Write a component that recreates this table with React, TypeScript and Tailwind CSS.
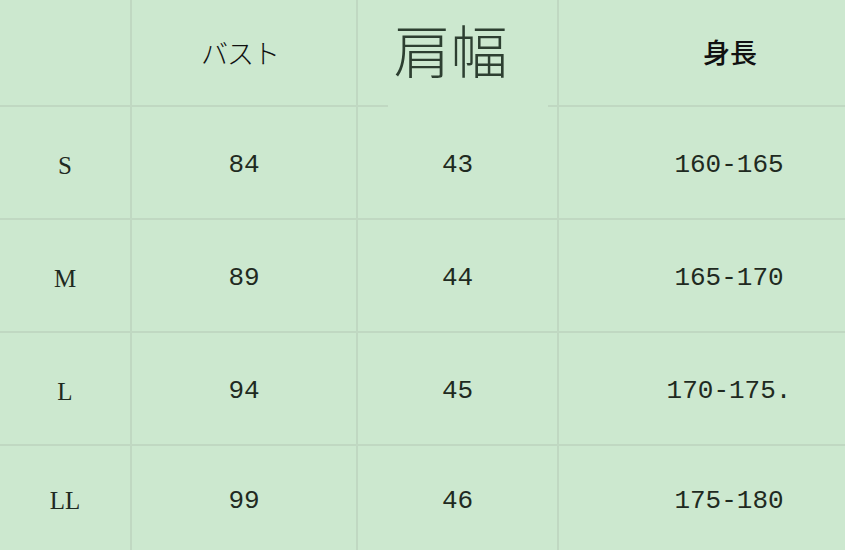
const rows = [
  { size: 'S', bust: '84', shoulder: '43', height: '160-165' },
  { size: 'M', bust: '89', shoulder: '44', height: '165-170' },
  { size: 'L', bust: '94', shoulder: '45', height: '170-175.' },
  { size: 'LL', bust: '99', shoulder: '46', height: '175-180' },
];

const mono = "[font-family:'Liberation_Mono','DejaVu_Sans_Mono',monospace]";
const cell = 'bg-[#cce8cf] flex items-center justify-center text-[#1f2a21]';

export default function App() {
  return (
    <div className="w-[845px] h-[550px] overflow-hidden bg-[#c0d8c2]">
      <div className="grid grid-cols-[130px_224px_199px_286px] grid-rows-[105px_111px_111px_111px_104px] gap-[2px]">
        {/* header */}
        <div className={cell} />
        <div className={`${cell} pr-[8px] pt-[1px]`}>
          <span className="text-[27px] font-light tracking-[-1px] text-[#111] [font-family:'Noto_Sans_CJK_JP',sans-serif]">バスト</span>
        </div>
        <div className={`${cell} relative pr-[14px] pb-[8px]`}>
          <span className="text-[57px] font-light leading-none text-[#2d3f31] [font-family:'Noto_Sans_CJK_JP',sans-serif]">肩幅</span>
          <div className="absolute left-[30px] -bottom-[2px] w-[160px] h-[2px] bg-[#cce8cf]" />
        </div>
        <div className={`${cell} pl-[56px]`}>
          <span className="text-[27px] font-medium text-[#111] [font-family:'Noto_Sans_CJK_JP',sans-serif]">身長</span>
        </div>

        {rows.map((r) => (
          <>
            <div key={r.size + 'a'} className={`${cell} pt-[6px]`}>
              <span className="text-[25px] [font-family:'Liberation_Serif',serif]">{r.size}</span>
            </div>
            <div key={r.size + 'b'} className={`${cell} pt-[6px]`}>
              <span className={`text-[26px] ${mono}`}>{r.bust}</span>
            </div>
            <div key={r.size + 'c'} className={`${cell} pt-[6px]`}>
              <span className={`text-[26px] ${mono}`}>{r.shoulder}</span>
            </div>
            <div key={r.size + 'd'} className={`${cell} pl-[54px] pt-[6px]`}>
              <span className={`text-[26px] ${mono}`}>{r.height}</span>
            </div>
          </>
        ))}
      </div>
    </div>
  );
}
